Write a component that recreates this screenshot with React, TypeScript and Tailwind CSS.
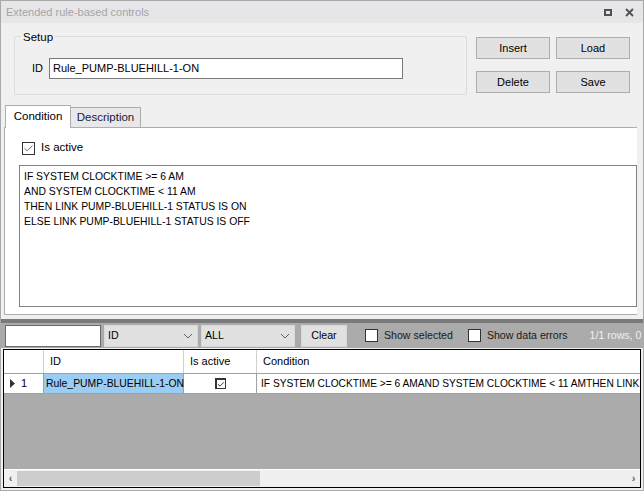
import { Check } from 'lucide-react';

const font = { fontFamily: '"Liberation Sans", Arial, sans-serif' };

function Btn({ label }: { label: string }) {
  return (
    <button className="w-[74px] h-[22px] bg-[#e1e1e1] border border-[#adadad] text-[11px] text-black">
      {label}
    </button>
  );
}

function Combo({ label, w }: { label: string; w: string }) {
  return (
    <div className={`${w} shrink-0 h-[22px] bg-[#e1e1e1] border border-[#d9d9d9] flex items-center justify-between pl-[3px] pr-[4px] text-black`}>
      <span>{label}</span>
      <svg width="10" height="6" viewBox="0 0 10 6">
        <path d="M1 1 L5 5 L9 1" stroke="#606060" strokeWidth="1" fill="none" />
      </svg>
    </div>
  );
}

export default function App() {
  const lines = [
    'IF SYSTEM CLOCKTIME >= 6 AM',
    'AND SYSTEM CLOCKTIME < 11 AM',
    'THEN LINK PUMP-BLUEHILL-1 STATUS IS ON',
    'ELSE LINK PUMP-BLUEHILL-1 STATUS IS OFF',
  ];

  return (
    <div style={font} className="w-[644px] h-[491px] border border-[#a9a9a9] bg-[#f0f0f0] flex flex-col overflow-hidden text-[11px]">
      {/* title bar */}
      <div className="h-[22px] bg-[#e6e6e8] flex items-center justify-between pl-[5px] pr-[9px] shrink-0">
        <span className="text-[#a4a4a8] text-[11px]">Extended rule-based controls</span>
        <div className="flex items-center gap-[13px]">
          <div className="w-[8px] h-[7px] border-2 border-[#50505a]" />
          <svg width="9" height="9" viewBox="0 0 9 9">
            <path d="M1 1 L8 8 M8 1 L1 8" stroke="#50505a" strokeWidth="1.8" />
          </svg>
        </div>
      </div>

      {/* setup + buttons */}
      <div className="flex pt-[13px] pl-[13px] h-[80px] shrink-0">
        <div className="relative w-[453px] h-[59px] border border-[#dcdcdc] rounded-[2px] shrink-0">
          <span className="absolute -top-[8px] left-[6px] bg-[#f0f0f0] px-[2px] text-black text-[11.5px]">Setup</span>
          <div className="flex items-center mt-[21px] ml-[17px] gap-[6px]">
            <span>ID</span>
            <div className="w-[354px] h-[21px] bg-white border border-[#7a7a7a] flex items-center px-[3px]">
              Rule_PUMP-BLUEHILL-1-ON
            </div>
          </div>
        </div>
        <div className="grid grid-cols-2 gap-x-[6px] gap-y-[12px] ml-[9px] mt-[1px] h-[56px] shrink-0">
          <Btn label="Insert" />
          <Btn label="Load" />
          <Btn label="Delete" />
          <Btn label="Save" />
        </div>
      </div>

      {/* tabs */}
      <div className="flex items-end pl-[4px] h-[23px] mt-[1px] shrink-0">
        <div className="h-[23px] w-[66px] bg-white border border-b-0 border-[#adadad] flex items-center justify-center relative z-10 -mb-px text-[11.5px]">
          Condition
        </div>
        <div className="h-[20px] w-[70px] bg-[#e8e8ec] border border-l-0 border-b-0 border-[#adadad] flex items-center justify-center text-[#202030] text-[11.5px]">
          Description
        </div>
      </div>
      <div className="ml-[3px] mr-[6px] h-[188px] bg-white border border-[#adadad] border-r-0 flex flex-col shrink-0">
        <label className="flex items-center gap-[6px] mt-[12px] ml-[17px] h-[16px] text-[11.5px]">
          <span className="w-[13px] h-[13px] border border-[#333] flex items-center justify-center bg-white">
            <Check size={11} strokeWidth={1.6} color="#333" />
          </span>
          <span>Is active</span>
        </label>
        <div className="mt-[9px] ml-[14px] h-[142px] border border-[#828282] pt-[3px] pl-[4px] leading-[15px] text-[10.4px]">
          {lines.map((l) => (
            <div key={l}>{l}</div>
          ))}
        </div>
      </div>

      {/* splitter */}
      <div className="h-[4px] mt-[4px] bg-[#7a7a7a] shrink-0" />

      {/* toolbar */}
      <div className="h-[25px] bg-[#ababab] flex items-center pl-[4px] gap-[3px] shrink-0 whitespace-nowrap overflow-hidden text-[10.6px]">
        <div className="w-[96px] shrink-0 h-[22px] bg-white border border-[#6a6a6a]" />
        <Combo label="ID" w="w-[94px]" />
        <Combo label="ALL" w="w-[94px]" />
        <div className="ml-[3px] shrink-0 w-[46px] h-[22px] bg-[#e1e1e1] border border-[#d9d9d9] flex items-center justify-center">Clear</div>
        <div className="flex items-center gap-[6px] ml-[15px] shrink-0">
          <span className="w-[13px] h-[13px] bg-white border border-[#333]" />
          <span className="text-[#1a1a1a]">Show selected</span>
        </div>
        <div className="flex items-center gap-[6px] ml-[12px] shrink-0">
          <span className="w-[13px] h-[13px] bg-white border border-[#333]" />
          <span className="text-[#1a1a1a]">Show data errors</span>
        </div>
        <span className="ml-[19px] text-[#f0f0f0] shrink-0">1/1 rows, 0</span>
      </div>

      {/* grid */}
      <div className="mx-[2px] mt-[1px] flex-1 border border-black flex flex-col bg-[#ababab] overflow-hidden">
        <div className="flex h-[24px] bg-white border-b border-[#a0a0a0] shrink-0 whitespace-nowrap">
          <div className="w-[40px] shrink-0 border-r border-[#d0d0d0]" />
          <div className="w-[140px] shrink-0 border-r border-[#d0d0d0] flex items-center pl-[6px]">ID</div>
          <div className="w-[73px] shrink-0 border-r border-[#d0d0d0] flex items-center pl-[6px]">Is active</div>
          <div className="flex-1 flex items-center pl-[6px]">Condition</div>
        </div>
        <div className="flex h-[20px] bg-white border-b border-[#a0a0a0] shrink-0 whitespace-nowrap overflow-hidden">
          <div className="w-[40px] shrink-0 border-r border-[#a0a0a0] flex items-center pl-[6px] gap-[6px]">
            <svg width="5" height="9" viewBox="0 0 5 9">
              <path d="M0 0 L5 4.5 L0 9 Z" fill="#333" />
            </svg>
            <span>1</span>
          </div>
          <div className="w-[140px] shrink-0 bg-[#9bcdf3] border-r border-[#a0a0a0] flex items-center pl-[2px] text-[10.4px]">Rule_PUMP-BLUEHILL-1-ON</div>
          <div className="w-[73px] shrink-0 border-r border-[#a0a0a0] flex items-center justify-center">
            <span className="w-[11px] h-[11px] border border-[#333] border-l-[2px] border-t-[2px] flex items-center justify-center">
              <Check size={9} strokeWidth={2.5} color="#111" />
            </span>
          </div>
          <div className="flex-1 min-w-0 overflow-hidden flex items-center pl-[4px] text-[10.2px]">
            IF SYSTEM CLOCKTIME &gt;= 6 AMAND SYSTEM CLOCKTIME &lt; 11 AMTHEN LINK PUMP-BLUEHILL-1 STATUS IS ON
          </div>
        </div>
        <div className="flex-1" />
        <div className="h-[18px] bg-[#f0f0f0] border-t border-white flex items-center shrink-0">
          <span className="w-[13px] flex justify-center text-[#606060] font-bold">‹</span>
          <div className="w-[243px] h-[15px] bg-[#cdcdcd]" />
          <div className="flex-1" />
          <span className="w-[13px] flex justify-center text-[#606060] font-bold">›</span>
        </div>
      </div>
      <div className="h-[2px] shrink-0" />
    </div>
  );
}
